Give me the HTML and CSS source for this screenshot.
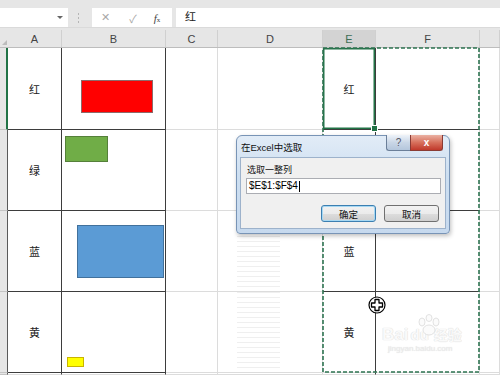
FILE: index.html
```html
<!DOCTYPE html>
<html>
<head>
<meta charset="utf-8">
<link rel="stylesheet" href="styles.css">
</head>
<body>
<div class="topstrip"></div>
<div class="fbar">
  <div class="namebox"><span class="arrow"></span></div>
  <div class="grip"><span></span><span></span><span></span></div>
  <div class="fxbox"><span class="fx1">✕</span><span class="fx2">✓</span><span class="fx3"><i>f</i><small>x</small></span></div>
  <div class="finput">红</div>
</div>
<div class="gap"></div>
<div class="colhead">
  <div class="h corner"><span class="tri"></span></div>
  <div class="h">A</div>
  <div class="h">B</div>
  <div class="h">C</div>
  <div class="h">D</div>
  <div class="h sel">E</div>
  <div class="h">F</div>
  <div class="h"></div>
</div>
<div class="sheet">
  <div class="rh act"></div>
  <div class="c dr db">红</div>
  <div class="c dr db canvas"><div class="shp red"></div></div>
  <div class="c"></div>
  <div class="c"></div>
  <div class="c dr db active">红</div>
  <div class="c db"></div>
  <div class="c"></div>

  <div class="rh"></div>
  <div class="c dr db">绿</div>
  <div class="c dr db canvas"><div class="shp green"></div></div>
  <div class="c"></div>
  <div class="c"></div>
  <div class="c dr db">绿</div>
  <div class="c db"></div>
  <div class="c"></div>

  <div class="rh"></div>
  <div class="c dr db">蓝</div>
  <div class="c dr db canvas"><div class="shp blue"></div></div>
  <div class="c"></div>
  <div class="c canvas"><div class="ghost g1"></div></div>
  <div class="c dr db">蓝</div>
  <div class="c db"></div>
  <div class="c"></div>

  <div class="rh"></div>
  <div class="c dr db">黄</div>
  <div class="c dr db canvas"><div class="shp yellow"></div></div>
  <div class="c"></div>
  <div class="c canvas"><div class="ghost g2"></div></div>
  <div class="c dr">黄</div>
  <div class="c"></div>
  <div class="c"></div>

  <div class="rh"></div>
  <div class="c dr"></div>
  <div class="c dr"></div>
  <div class="c"></div>
  <div class="c"></div>
  <div class="c dr"></div>
  <div class="c"></div>
  <div class="c"></div>
</div>

<svg class="ants" width="159" height="327" viewBox="0 0 159 327">
  <rect x="1" y="1" width="156" height="324" fill="none" stroke="#2e7452" stroke-width="1.6" stroke-dasharray="4 2"/>
</svg>

<div class="watermark">
  <svg class="paw" width="30" height="22" viewBox="0 0 30 22">
    <g fill="#fbfbfb" stroke="#e2e2e2" stroke-width="1">
      <ellipse cx="8" cy="8" rx="3" ry="4"/>
      <ellipse cx="15" cy="4" rx="3" ry="3.5"/>
      <ellipse cx="22" cy="8" rx="3" ry="4"/>
      <ellipse cx="15" cy="16" rx="6" ry="5"/>
    </g>
  </svg>
  <div class="wm1"><span class="bai">Bai</span><span class="du">du</span><span class="jy">经验</span></div>
  <div class="wm2">jingyan.baidu.com</div>
</div>

<svg class="cursor" width="20" height="20" viewBox="0 0 20 20">
  <circle cx="10" cy="10" r="8" fill="#fff" stroke="#000" stroke-width="1.2"/>
  <path d="M8 4.5h4v3.5h3.5v4H12v3.5H8V12H4.5V8H8z" fill="#fff" stroke="#000" stroke-width="1.3" stroke-linejoin="round"/>
</svg>

<div class="dlg">
  <div class="dlg-title">
    <span class="ttl">在Excel中选取</span>
    <div class="tbtns"><span class="help">?</span><span class="close">x</span></div>
  </div>
  <div class="dlg-body">
    <div class="lbl">选取一整列</div>
    <div class="inp">$E$1:$F$4<span class="caret"></span></div>
    <div class="btns"><span class="btn def">确定</span><span class="btn">取消</span></div>
  </div>
</div>
</body>
</html>
```
FILE: styles.css
```css
* { box-sizing: border-box; }
body {
  margin: 0;
  width: 500px;
  height: 375px;
  overflow: hidden;
  position: relative;
  background: #e6e6e6;
  font-family: "Liberation Sans", "Noto Sans CJK SC", sans-serif;
  color: #222;
}
.topstrip { height: 8px; background: #e6e6e6; }
.fbar { height: 19px; display: flex; }
.namebox {
  width: 68px; background: #fff;
  display: flex; align-items: center; justify-content: flex-end; padding-right: 5px;
}
.arrow {
  width: 0; height: 0;
  border-left: 3px solid transparent; border-right: 3px solid transparent;
  border-top: 3px solid #666;
}
.grip {
  width: 24px; display: flex; flex-direction: column; justify-content: center;
  gap: 2px; padding-left: 10px;
}
.grip span { width: 1px; height: 2px; background: #b5b5b5; }
.fxbox {
  width: 80px; background: #fff; display: flex; align-items: center;
  font-size: 11px; color: #a8a8a8;
}
.fx1 { width: 26px; text-align: center; }
.fx2 { width: 30px; text-align: center; }
.fx3 { width: 18px; text-align: center; color: #444; font-family: "Liberation Serif", serif; font-size: 11px; }
.fx3 small { font-size: 7px; }
.finput {
  flex: 1; margin-left: 4px; background: #fff;
  padding-left: 9px; font-size: 11px; line-height: 19px; color: #222;
}
.gap { height: 3px; border-top: 1px solid #dadada; }

.colhead, .sheet {
  display: grid;
  grid-template-columns: 8px 54px 104px 52px 105px 53px 104px 20px;
}
.colhead { height: 18px; background: #e6e6e6; border-bottom: 1px solid #bdbdbd; }
.h {
  font-size: 11px; color: #444;
  display: flex; align-items: center; justify-content: center;
  border-right: 1px solid #d0d0d0;
}
.h.sel { background: #d3d3d3; color: #3c6e55; }
.corner { position: relative; border-right: none; }
.tri {
  position: absolute; right: 1px; bottom: 2px; width: 0; height: 0;
  border-left: 5px solid transparent; border-bottom: 5px solid #bcbcbc;
}
.sheet {
  grid-template-rows: 82px 81px 81px 81px 2px;
  background: #fff;
}
.rh {
  background: #e6e6e6; border-bottom: 1px solid #c4c4c4;
  border-right: 1px solid #5a5a5a;
}
.rh.act { border-right: 2px solid #217346; }
.c {
  background: #fff;
  border-right: 1px solid #dcdcdc;
  border-bottom: 1px solid #dcdcdc;
  display: flex; align-items: center; justify-content: center;
  font-size: 11px; color: #222;
}
.c.dr { border-right-color: #3d3d3d; }
.c.db { border-bottom-color: #3d3d3d; }
.c.canvas { display: block; }
.c.active { box-shadow: inset 0 0 0 1.5px #217346; position: relative; }
.c.active::after {
  content: ""; position: absolute; right: -3px; bottom: -3px;
  width: 5px; height: 5px; background: #217346; border: 1px solid #fff;
}
.shp { border: 1px solid; }
.red { margin: 32px 0 0 19px; width: 72px; height: 33px; background: #ff0000; border-color: #8d6a6a; }
.green { margin: 6px 0 0 3px; width: 43px; height: 26px; background: #70ad47; border-color: #55803a; }
.blue { margin: 14px 0 0 15px; width: 87px; height: 53px; background: #5b9bd5; border-color: #41719c; }
.yellow { margin: 65px 0 0 5px; width: 17px; height: 10px; background: #ffff00; border-color: #c9b400; }
.ghost {
  margin-left: 19px; width: 43px;
  background: repeating-linear-gradient(to bottom, #efefef 0 1px, #fff 1px 5px);
}
.g1 { margin-top: 25px; height: 55px; }
.g2 { height: 78px; }

.ants { position: absolute; left: 322px; top: 47px; }
.cursor { position: absolute; left: 367px; top: 295px; }

.watermark { position: absolute; left: 382px; top: 314px; width: 90px; }
.paw { position: absolute; left: 32px; top: 0; }
.wm1 {
  margin-top: 10px; display: flex; align-items: baseline;
  color: #fafafa; font-weight: bold;
  text-shadow: 0 0 1px #dcdcdc, 0 0 1px #dcdcdc;
}
.bai { font-size: 17px; }
.du { font-size: 15px; margin-left: 2px; }
.jy { font-size: 14px; margin-left: 5px; }
.wm2 { font-size: 8px; color: #ececec; text-shadow: 0 0 1px #dadada; margin-left: 6px; margin-top: -1px; }

.dlg {
  position: absolute; left: 236px; top: 135px; width: 214px; height: 99px;
  background: linear-gradient(to bottom, #e2ecf7, #cddff1 40%, #c6d9ee);
  border: 1px solid #7894b6; border-radius: 6px 6px 4px 4px;
  padding: 0 3px 3px 3px;
  box-shadow: 1px 2px 4px rgba(0,0,0,0.25);
}
.dlg-title {
  height: 21px; position: relative;
  display: flex; align-items: center; padding-left: 1px;
}
.ttl { font-size: 9.5px; color: #111; }
.tbtns { position: absolute; right: 3px; top: -1px; display: flex; }
.tbtns span {
  height: 16px; display: flex; align-items: center; justify-content: center;
  font-size: 10px; border: 1px solid #6b7f99; border-top: none;
}
.help {
  width: 24px; color: #556; border-radius: 0 0 0 3px; border-right: none !important;
  background: linear-gradient(to bottom, #eef3f9, #c9d6e6 50%, #b4c6dc);
}
.close {
  width: 33px; color: #fff; font-weight: bold; border-radius: 0 0 3px 0;
  background: linear-gradient(to bottom, #eab1a3, #d7705c 50%, #c0392b);
  border-color: #8a3b34 !important;
}
.dlg-body {
  height: 72px; background: #f0f0f0; border: 1px solid #9db2cb;
  padding: 6px 5px 0 5px;
}
.lbl { font-size: 9px; line-height: 12px; padding-left: 1px; color: #111; }
.inp {
  margin-top: 2px; height: 16px; width: 195px; background: #fff;
  border: 1px solid #abadb3; font-size: 10px; line-height: 14px; padding-left: 2px;
  display: flex; align-items: center; color: #000;
}
.caret { width: 1px; height: 11px; background: #000; margin-left: 1px; }
.btns { margin-top: 11px; display: flex; justify-content: flex-end; gap: 8px; padding-right: 1px; }
.btn {
  width: 55px; height: 17px; font-size: 9.5px; color: #111;
  display: flex; align-items: center; justify-content: center;
  border: 1px solid #707070; border-radius: 3px;
  background: linear-gradient(to bottom, #f2f2f2, #ebebeb 50%, #dddddd 51%, #cfcfcf);
}
.btn.def { border-color: #3c7fb1; box-shadow: inset 0 0 0 1px #a6d8f3; }
```
